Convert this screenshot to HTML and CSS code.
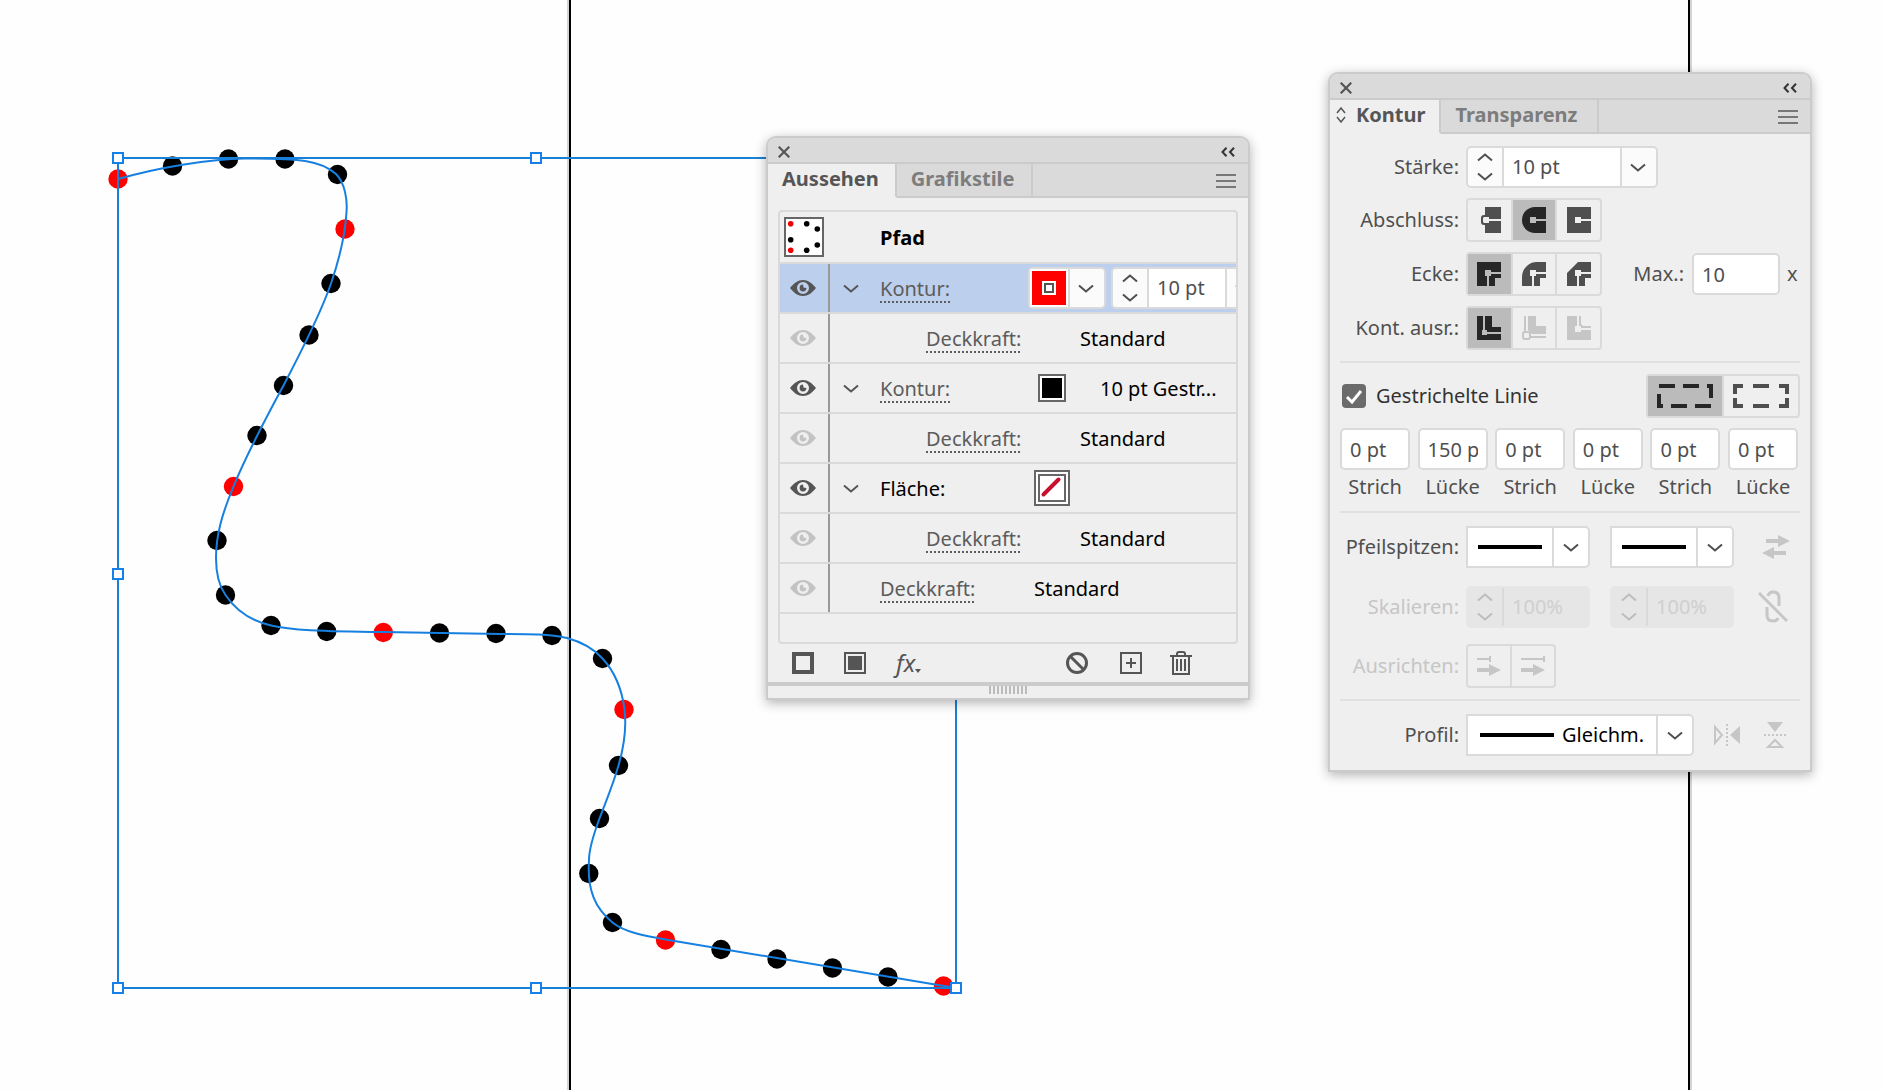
FILE: index.html
```html
<!DOCTYPE html>
<html lang="de">
<head>
<meta charset="utf-8">
<meta name="viewport" content="width=device-width, initial-scale=1">
<title>Kontur und Aussehen</title>
<link rel="stylesheet" href="styles.css">
</head>
<body>
<svg class="symbols" aria-hidden="true">
  <symbol id="eye" viewBox="0 0 26 16"><path fill="currentColor" fill-rule="evenodd" d="M0 8C4 3 8 0 13 0s9 3 13 8c-4 5-8 8-13 8S4 13 0 8zM13 2a6 6 0 1 0 0 12a6 6 0 1 0 0-12z"/><path fill="currentColor" d="M13 4.600a3.400 3.400 0 1 0 3.400 3.400L13.500 7.500z"/></symbol>
  <symbol id="down" viewBox="0 0 16 9"><path d="M1 1.500L8 7.500L15 1.500" fill="none" stroke="currentColor" stroke-width="2"/></symbol>
  <symbol id="up" viewBox="0 0 16 9"><path d="M1 7.500L8 1.500L15 7.500" fill="none" stroke="currentColor" stroke-width="2"/></symbol>
  <symbol id="close" viewBox="0 0 12 12"><path d="M.7.700L11.300 11.300M11.300.7L.7 11.300" fill="none" stroke="currentColor" stroke-width="2.200"/></symbol>
  <symbol id="collapse" viewBox="0 0 14 10"><path d="M5.500.8L1.500 5L5.500 9.200M13 .8L9 5L13 9.200" fill="none" stroke="currentColor" stroke-width="2"/></symbol>
  <symbol id="menu" viewBox="0 0 20 14"><path d="M0 1H20M0 7H20M0 13H20" stroke="currentColor" stroke-width="2"/></symbol>
</svg>

<main class="workspace">
  <svg class="drawing" aria-label="Pfad">
    <g class="guides">
      <rect class="guide-soft" x="567" y="0" width="2" height="100%"/>
      <rect x="569" y="0" width="2" height="100%"/>
      <rect x="1688" y="0" width="2" height="100%"/>
      <rect class="guide-soft" x="1690" y="0" width="2" height="100%"/>
    </g>
    <g class="dots">
      <circle cx="172.500" cy="166" r="9.700"/><circle cx="228.500" cy="159" r="9.700"/><circle cx="285" cy="159" r="9.700"/><circle cx="337.500" cy="174.500" r="9.700"/>
      <circle cx="331" cy="283.500" r="9.700"/><circle cx="309" cy="335" r="9.700"/><circle cx="283.500" cy="385.500" r="9.700"/><circle cx="257" cy="435.500" r="9.700"/>
      <circle cx="217" cy="540.500" r="9.700"/><circle cx="225.500" cy="595" r="9.700"/><circle cx="271" cy="625.500" r="9.700"/><circle cx="326.700" cy="631.500" r="9.700"/>
      <circle cx="439.500" cy="633" r="9.700"/><circle cx="496" cy="633.500" r="9.700"/><circle cx="552" cy="635.500" r="9.700"/><circle cx="602.500" cy="658.500" r="9.700"/>
      <circle cx="618.500" cy="765.500" r="9.700"/><circle cx="599.500" cy="818.500" r="9.700"/><circle cx="588.800" cy="873.500" r="9.700"/><circle cx="612.500" cy="922.500" r="9.700"/>
      <circle cx="721" cy="949.500" r="9.700"/><circle cx="777" cy="959" r="9.700"/><circle cx="832.500" cy="968" r="9.700"/><circle cx="888" cy="977" r="9.700"/>
    </g>
    <g class="dots-red">
      <circle cx="118" cy="179" r="9.700"/><circle cx="345" cy="229" r="9.700"/><circle cx="233.500" cy="486.500" r="9.700"/><circle cx="383.300" cy="632.500" r="9.700"/>
      <circle cx="624" cy="709.500" r="9.700"/><circle cx="665.500" cy="940" r="9.700"/><circle cx="943.500" cy="986" r="9.700"/>
    </g>
    <path class="curve" d="M118 179C160 167 210 159 245 158.500C300 158.500 320 160 336 174C345 183 347.500 200 346.500 212C345 238 338 263 331 283.500C323 307 300 354 283.500 385.500C266 418 247 453 233.500 486.500C222 514 216 535 216 558C216 576 219 586 225.500 595C236 611 252 621 271 625.500C290 630 320 631.500 383 632L500 634C530 634 550 634 567 638C582 642 594 649 602.500 658.500C615 672 622 690 624.500 709.500C627 730 623 750 618.500 765.500C613 785 606 801 599.500 818.500C593 836 589 850 589 860C587 890 595 908 612.500 922.500C624 932 645 936 665.500 939.500L956 988"/>
    <rect class="bounds" x="118" y="158" width="838" height="830"/>
    <g class="handles">
      <rect x="113" y="153" width="10" height="10"/><rect x="531" y="153" width="10" height="10"/>
      <rect x="113" y="569" width="10" height="10"/><rect x="113" y="983" width="10" height="10"/>
      <rect x="531" y="983" width="10" height="10"/><rect x="951" y="983" width="10" height="10"/>
    </g>
  </svg>

  <section class="panel panel-appearance" aria-label="Aussehen">
    <header class="titlebar">
      <button class="bare" type="button" aria-label="Schließen"><svg width="12" height="12"><use href="#close"/></svg></button>
      <button class="bare dark" type="button" aria-label="Minimieren"><svg width="14" height="10"><use href="#collapse"/></svg></button>
    </header>
    <nav class="tabs">
      <button class="tab tab-active" type="button">Aussehen</button>
      <button class="tab" type="button">Grafikstile</button>
      <button class="bare tab-menu" type="button" aria-label="Menü"><svg width="20" height="14"><use href="#menu"/></svg></button>
    </nav>
    <div class="list">
      <div class="row row-head">
        <svg class="thumb" width="40" height="40" viewBox="0 0 40 40"><rect x="1" y="1" width="38" height="38" fill="#fff" stroke="#666" stroke-width="2"/><g fill="#000"><circle cx="22.700" cy="6.700" r="2.800"/><circle cx="33.300" cy="12" r="2.800"/><circle cx="6.700" cy="22.700" r="2.800"/><circle cx="33.300" cy="28" r="2.800"/><circle cx="22.700" cy="33.300" r="2.800"/></g><g fill="#f00000"><circle cx="6.700" cy="6.700" r="2.800"/><circle cx="6.700" cy="33.300" r="2.800"/></g></svg>
        <strong class="name">Pfad</strong>
      </div>
      <div class="row row-selected">
        <button class="bare eye" type="button" aria-label="Sichtbarkeit"><svg width="26" height="16"><use href="#eye"/></svg></button>
        <button class="bare twist" type="button" aria-label="Aufklappen"><svg width="16" height="9"><use href="#down"/></svg></button>
        <a class="name link" href="#kontur">Kontur:</a>
        <div class="controls">
          <div class="field">
            <button class="swatch-red" type="button" aria-label="Konturfarbe"><svg width="34" height="34" viewBox="0 0 34 34"><rect width="34" height="34" fill="#f00"/><rect x="10" y="10" width="14" height="14" fill="#fff"/><rect x="13" y="13" width="8" height="8" fill="#fff" stroke="#555" stroke-width="2"/></svg></button>
            <button class="drop" type="button" aria-label="Farbe wählen"><svg width="16" height="9"><use href="#down"/></svg></button>
          </div>
          <div class="field">
            <div class="spin"><button type="button" aria-label="Mehr"><svg width="16" height="9"><use href="#up"/></svg></button><button type="button" aria-label="Weniger"><svg width="16" height="9"><use href="#down"/></svg></button></div>
            <input class="value value-row" type="text" value="10 pt" aria-label="Konturstärke">
            <button class="drop" type="button" aria-label="Stärke wählen"><svg width="16" height="9"><use href="#down"/></svg></button>
          </div>
        </div>
      </div>
      <div class="row">
        <button class="bare eye eye-off" type="button" aria-label="Sichtbarkeit"><svg width="26" height="16"><use href="#eye"/></svg></button>
        <a class="sub link" href="#deckkraft">Deckkraft:</a><span class="text">Standard</span>
      </div>
      <div class="row">
        <button class="bare eye" type="button" aria-label="Sichtbarkeit"><svg width="26" height="16"><use href="#eye"/></svg></button>
        <button class="bare twist" type="button" aria-label="Aufklappen"><svg width="16" height="9"><use href="#down"/></svg></button>
        <a class="name link" href="#kontur">Kontur:</a>
        <svg class="swatch" width="36" height="28" viewBox="0 0 36 28"><rect x="5" y="1" width="26" height="26" fill="#fff" stroke="#666" stroke-width="2"/><rect x="8" y="4" width="20" height="20"/></svg>
        <span class="text">10 pt Gestr...</span>
      </div>
      <div class="row">
        <button class="bare eye eye-off" type="button" aria-label="Sichtbarkeit"><svg width="26" height="16"><use href="#eye"/></svg></button>
        <a class="sub link" href="#deckkraft">Deckkraft:</a><span class="text">Standard</span>
      </div>
      <div class="row">
        <button class="bare eye" type="button" aria-label="Sichtbarkeit"><svg width="26" height="16"><use href="#eye"/></svg></button>
        <button class="bare twist" type="button" aria-label="Aufklappen"><svg width="16" height="9"><use href="#down"/></svg></button>
        <span class="name">Fläche:</span>
        <svg class="swatch" width="36" height="36" viewBox="0 0 36 36"><rect x="1" y="1" width="34" height="34" fill="#fff" stroke="#666" stroke-width="2"/><rect x="5" y="5" width="26" height="26" fill="#fff" stroke="#666" stroke-width="2"/><path d="M9.500 24.500L24.500 9.500" stroke="#c8102e" stroke-width="4" stroke-linecap="round"/></svg>
      </div>
      <div class="row">
        <button class="bare eye eye-off" type="button" aria-label="Sichtbarkeit"><svg width="26" height="16"><use href="#eye"/></svg></button>
        <a class="sub link" href="#deckkraft">Deckkraft:</a><span class="text">Standard</span>
      </div>
      <div class="row">
        <button class="bare eye eye-off" type="button" aria-label="Sichtbarkeit"><svg width="26" height="16"><use href="#eye"/></svg></button>
        <a class="name name-only link" href="#deckkraft">Deckkraft:</a><span class="text">Standard</span>
      </div>
    </div>
    <footer class="tools">
      <div class="tool-group">
        <button class="bare" type="button" aria-label="Neue Kontur"><svg width="22" height="22"><rect x="2" y="2" width="18" height="18" fill="none" stroke="currentColor" stroke-width="4"/></svg></button>
        <button class="bare" type="button" aria-label="Neue Fläche"><svg width="22" height="22"><rect x="1" y="1" width="20" height="20" fill="none" stroke="currentColor" stroke-width="2"/><rect x="4" y="4" width="14" height="14" fill="currentColor"/></svg></button>
        <button class="bare fx" type="button" aria-label="Effekt">fx<svg width="6" height="4"><path d="M0 0H6L3 4z" fill="currentColor"/></svg></button>
      </div>
      <div class="tool-group tool-group-end">
        <button class="bare" type="button" aria-label="Aussehen löschen"><svg width="22" height="22"><circle cx="11" cy="11" r="9.500" fill="none" stroke="currentColor" stroke-width="3"/><path d="M4.500 4.500L17.500 17.500" stroke="currentColor" stroke-width="3"/></svg></button>
        <button class="bare" type="button" aria-label="Duplizieren"><svg width="22" height="22"><path d="M1 1H21V21H1zM11 6V16M6 11H16" fill="none" stroke="currentColor" stroke-width="2"/></svg></button>
        <button class="bare" type="button" aria-label="Löschen"><svg width="22" height="24"><path d="M0 5H22M3 5V23H19V5M7 5V3Q7 1 9 1H13Q15 1 15 3V5M7 8V20M11 8V20M15 8V20" fill="none" stroke="currentColor" stroke-width="2"/></svg></button>
      </div>
    </footer>
    <div class="grip"><span class="grip-bars"></span></div>
  </section>

  <section class="panel panel-stroke" aria-label="Kontur">
    <header class="titlebar">
      <button class="bare" type="button" aria-label="Schließen"><svg width="12" height="12"><use href="#close"/></svg></button>
      <button class="bare dark" type="button" aria-label="Minimieren"><svg width="14" height="10"><use href="#collapse"/></svg></button>
    </header>
    <nav class="tabs">
      <button class="tab tab-active tab-cycle" type="button"><svg width="10" height="16"><path d="M1 6L5 1L9 6M1 10L5 15L9 10" fill="none" stroke="currentColor" stroke-width="1.500"/></svg>Kontur</button>
      <button class="tab tab-wide" type="button">Transparenz</button>
      <button class="bare tab-menu" type="button" aria-label="Menü"><svg width="20" height="14"><use href="#menu"/></svg></button>
    </nav>
    <form class="form">
      <div class="line">
        <label class="caption" for="weight">Stärke:</label>
        <div class="field">
          <div class="spin"><button type="button" aria-label="Mehr"><svg width="16" height="9"><use href="#up"/></svg></button><button type="button" aria-label="Weniger"><svg width="16" height="9"><use href="#down"/></svg></button></div>
          <input class="value value-weight" id="weight" type="text" value="10 pt">
          <button class="drop" type="button" aria-label="Stärke wählen"><svg width="16" height="9"><use href="#down"/></svg></button>
        </div>
      </div>
      <div class="line">
        <span class="caption">Abschluss:</span>
        <div class="segments" role="group" aria-label="Abschluss">
          <button type="button" aria-label="Abgeflacht"><svg width="24" height="26"><path d="M8 0H24V12H12V14H24V26H8z" fill="currentColor"/><rect x="4" y="8" width="8" height="10" rx="3" fill="currentColor"/><path class="cut" d="M7 10H12V12H24V14H12V16H7L6 15V11z"/></svg></button>
          <button class="on" type="button" aria-label="Abgerundet"><svg width="24" height="26"><path d="M24 0H13A13 13 0 0 0 13 26H24z" fill="currentColor"/><path class="cut" d="M8 10H14V12H24V14H14V16H8z"/></svg></button>
          <button type="button" aria-label="Überstehend"><svg width="24" height="26"><path d="M0 0H24V26H0z" fill="currentColor"/><path class="cut" d="M8 10H14V12H24V14H14V16H8z"/></svg></button>
        </div>
      </div>
      <div class="line">
        <span class="caption">Ecke:</span>
        <div class="segments" role="group" aria-label="Ecke">
          <button class="on" type="button" aria-label="Gehrung"><svg width="24" height="24"><path d="M0 0H24V16H18V24H0z" fill="currentColor"/><path class="cut" d="M8 8H14V10H24V12H14V14H12V24H10V14H8z"/></svg></button>
          <button type="button" aria-label="Rund"><svg width="24" height="24"><path d="M24 0H15A15 15 0 0 0 0 15V24H18V16H24z" fill="currentColor"/><path class="cut" d="M8 8H14V10H24V12H14V14H12V24H10V14H8z"/></svg></button>
          <button type="button" aria-label="Abgeflachte Ecke"><svg width="24" height="24"><path d="M11 0H24V16H18V24H0V11z" fill="currentColor"/><path class="cut" d="M8 8H14V10H24V12H14V14H12V24H10V14H8z"/></svg></button>
        </div>
        <div class="miter"><label for="miter">Max.:</label><input class="box box-miter" id="miter" type="text" value="10"><span class="times">x</span></div>
      </div>
      <div class="line">
        <span class="caption">Kont. ausr.:</span>
        <div class="segments" role="group" aria-label="Kontur ausrichten">
          <button class="on" type="button" aria-label="Mitte"><svg width="24" height="24"><path d="M0 0H15V11H24V24H0z" fill="currentColor"/><path class="cut" d="M6 0H8V14H10V16H24V18H10V19H5V14H6z"/></svg></button>
          <button type="button" disabled aria-label="Innen"><svg width="24" height="24"><path d="M6 0H14V10H24V18H10L6 14zM2 0H4V16H2zM8 20H24V22H8z" fill="currentColor"/><rect x="1" y="16" width="7" height="7" rx="2" fill="none" stroke="currentColor" stroke-width="2"/></svg></button>
          <button type="button" disabled aria-label="Außen"><svg width="24" height="24"><path d="M0 0H10V14H24V24H0zM12 0H14V8L16 10H24V12H14L12 10z" fill="currentColor"/><path class="cut" d="M8 10H14V16H8z"/></svg></button>
        </div>
      </div>
      <hr>
      <div class="line line-dash">
        <label class="check"><input type="checkbox" checked><span>Gestrichelte Linie</span></label>
        <div class="segments segments-wide" role="group" aria-label="Strichausrichtung">
          <button class="on" type="button" aria-label="Exakte Längen"><svg width="56" height="24"><path fill="currentColor" d="M2 0H18V4H2zM26 0H42V4H26zM50 0H56V14H52V4H50zM0 10H4V20H6V24H0zM14 20H30V24H14zM38 20H54V24H38z"/></svg></button>
          <button type="button" aria-label="An Ecken ausrichten"><svg width="56" height="24"><path fill="currentColor" d="M0 0H10V4H4V10H0zM20 0H36V4H20zM46 0H56V10H52V4H46zM0 14H4V20H10V24H0zM20 20H36V24H20zM52 14H56V24H46V20H52z"/></svg></button>
        </div>
      </div>
      <div class="dashes">
        <label><input class="box" type="text" value="0 pt">Strich</label>
        <label><input class="box" type="text" value="150 pt">Lücke</label>
        <label><input class="box" type="text" value="0 pt">Strich</label>
        <label><input class="box" type="text" value="0 pt">Lücke</label>
        <label><input class="box" type="text" value="0 pt">Strich</label>
        <label><input class="box" type="text" value="0 pt">Lücke</label>
      </div>
      <hr>
      <div class="line line-arrows">
        <span class="caption">Pfeilspitzen:</span>
        <div class="pick pick-arrow"><select aria-label="Anfang"><option></option></select><span class="stroke"></span><svg class="pick-mark" width="16" height="9"><use href="#down"/></svg></div>
        <div class="pick pick-arrow"><select aria-label="Ende"><option></option></select><span class="stroke"></span><svg class="pick-mark" width="16" height="9"><use href="#down"/></svg></div>
        <button class="bare faint" type="button" aria-label="Tauschen"><svg width="28" height="24"><path fill="currentColor" d="M4 4H16V0L28 6L16 12V8H4zM24 20H12V24L0 18L12 12V16H24z"/></svg></button>
      </div>
      <div class="line line-scale faint">
        <label class="caption" for="scale">Skalieren:</label>
        <div class="field field-off">
          <div class="spin"><button type="button" disabled aria-label="Mehr"><svg width="16" height="9"><use href="#up"/></svg></button><button type="button" disabled aria-label="Weniger"><svg width="16" height="9"><use href="#down"/></svg></button></div>
          <input class="value value-scale" id="scale" type="text" value="100%" disabled>
        </div>
        <div class="field field-off">
          <div class="spin"><button type="button" disabled aria-label="Mehr"><svg width="16" height="9"><use href="#up"/></svg></button><button type="button" disabled aria-label="Weniger"><svg width="16" height="9"><use href="#down"/></svg></button></div>
          <input class="value value-scale" type="text" value="100%" disabled aria-label="Skalieren Ende">
        </div>
        <button class="bare faint" type="button" aria-label="Verknüpfen"><svg width="30" height="34"><path d="M1 3L29 31M10 6Q11 2 15 2Q21 2 21 8V16M9 17V25Q9 31 15 31Q19 31 20 28" fill="none" stroke="currentColor" stroke-width="3"/></svg></button>
      </div>
      <div class="line line-align faint">
        <span class="caption">Ausrichten:</span>
        <div class="segments segments-two" role="group" aria-label="Pfeilausrichtung">
          <button type="button" disabled aria-label="Über Ende hinaus"><svg width="24" height="20"><path fill="currentColor" d="M0 2H12V0H14V6H12V4H0zM0 12H12V8L24 14L12 20V16H0z"/></svg></button>
          <button type="button" disabled aria-label="Am Ende"><svg width="24" height="20"><path fill="currentColor" d="M0 2H22V0H24V6H22V4H0zM0 12H12V8L24 14L12 20V16H0z"/></svg></button>
        </div>
      </div>
      <hr>
      <div class="line line-profile">
        <label class="caption" for="profile">Profil:</label>
        <div class="pick pick-profile"><select id="profile"><option>Gleichm.</option></select><span class="stroke"></span><svg class="pick-mark" width="16" height="9"><use href="#down"/></svg></div>
        <button class="bare faint flip" type="button" aria-label="Horizontal spiegeln"><svg width="26" height="22"><path d="M1 3V19L8 11z" fill="none" stroke="currentColor" stroke-width="2"/><path d="M26 2V20L16 11z" fill="currentColor"/><path d="M13 0V22" stroke="currentColor" stroke-width="2" stroke-dasharray="2 2"/></svg></button>
        <button class="bare faint flip-v" type="button" aria-label="Vertikal spiegeln"><svg width="22" height="26"><path d="M3 0H19L11 10z" fill="currentColor"/><path d="M4 25H18L11 18z" fill="none" stroke="currentColor" stroke-width="2"/><path d="M0 13H22" stroke="currentColor" stroke-width="2" stroke-dasharray="2 2"/></svg></button>
      </div>
    </form>
  </section>
</main>
</body>
</html>
```

FILE: styles.css
```css
* { box-sizing: border-box; }

body {
  margin: 0;
  background: #fefefe;
  color: #4f4f4f;
  font: 20px/28px "Noto Sans", "Open Sans", sans-serif;
}

button, input, select {
  margin: 0;
  padding: 0;
  border: 0;
  background: none;
  color: inherit;
  font: inherit;
}

svg { display: block; flex: none; }
.symbols { position: absolute; width: 0; height: 0; }

/* Artboard */
.workspace {
  position: relative;
  min-height: 100vh;
  overflow: hidden;
}
.drawing {
  position: absolute;
  inset: 0;
  width: 100%;
  height: 100%;
}
.guide-soft { fill: #d4d4d4; }
.dots-red { fill: #f00; }
.curve { fill: none; stroke: #1680e0; stroke-width: 2; }
.bounds { fill: none; stroke: #1a7fd6; stroke-width: 2; }
.handles { fill: #fff; stroke: #1680e8; stroke-width: 2; }

/* Floating panels */
.panel {
  position: absolute;
  width: 484px;
  border: 2px solid #cbcbcb;
  border-radius: 10px 10px 0 0;
  background: #efefef;
  box-shadow: 0 3px 12px rgba(0, 0, 0, .3);
}
.panel-appearance { left: 766px; top: 136px; }
.panel-stroke { left: 1328px; top: 72px; }

.bare { display: flex; flex: none; align-items: center; color: #555; }
.bare.dark { color: #333; }

.titlebar {
  display: flex;
  justify-content: space-between;
  align-items: center;
  height: 26px;
  padding: 4px 13px 0 10px;
  border-bottom: 2px solid #cbcbcb;
  border-radius: 8px 8px 0 0;
  background: #dadada;
}
.tabs {
  display: flex;
  height: 34px;
  background: #dadada;
}
.tab {
  padding: 0 16px 2px 14px;
  border-right: 2px solid #cbcbcb;
  border-bottom: 2px solid #cbcbcb;
  color: #7d7d7d;
  font-weight: 700;
}
.tab-active {
  border-bottom-color: #efefef;
  background: #efefef;
  color: #555;
}
.tab-cycle {
  display: flex;
  align-items: center;
  gap: 10px;
  padding-left: 6px;
  padding-right: 14px;
}
.tab-wide { padding-right: 20px; }
.tab-menu {
  flex: 1;
  justify-content: flex-end;
  padding: 2px 12px 0 0;
  border-bottom: 2px solid #cbcbcb;
  color: #777;
}

/* Appearance list */
.list {
  margin: 12px 10px 0;
  padding-bottom: 28px;
  border: 2px solid #dadada;
  border-radius: 4px;
}
.row {
  display: flex;
  align-items: center;
  height: 50px;
  overflow: hidden;
  border-bottom: 2px solid #dadada;
  color: #000;
}
.row-head { height: 52px; }
.row-selected { background: #bccfed; }
.thumb { margin: 0 56px 0 4px; }
.eye {
  width: 50px;
  height: 48px;
  padding-left: 10px;
  border-right: 2px solid #999;
}
.eye-off { color: #c3c3c3; }
.twist { width: 50px; height: 48px; padding-left: 13px; }
.name, .sub { flex: none; width: 154px; }
.name, .sub, .text { padding-top: 2px; }
.name-only { margin-left: 50px; }
.sub { margin-left: 96px; }
.link { color: #5c5c5c; text-decoration: underline dotted 2px; text-underline-offset: 5px; }
.swatch { margin-right: 30px; }
.controls { display: flex; flex: none; gap: 5px; margin-left: -6px; color: #4f4f4f; }

/* Fields */
.field {
  display: flex;
  flex: none;
  height: 42px;
  border: 2px solid #dadada;
  border-radius: 5px;
  background: #fbfbfb;
}
.spin {
  display: flex;
  flex-direction: column;
  width: 36px;
  border-right: 2px solid #dadada;
}
.spin button {
  display: flex;
  flex: 1;
  align-items: center;
  justify-content: center;
}
.value { background: #fff; padding: 0 8px; min-width: 0; }
.value-weight { width: 116px; }
.value-row { width: 76px; }
.value-scale { width: 84px; }
.drop {
  display: flex;
  align-items: center;
  justify-content: center;
  width: 36px;
  padding-right: 2px;
  border-left: 2px solid #dadada;
}
.swatch-red { padding: 2px; background: #fff; }
.field-off, .field-off .value { border-color: #e6e6e6; background: #e6e6e6; color: #cfcfcf; }
.field-off svg { color: #bdbdbd; }

/* Appearance footer */
.tools {
  display: flex;
  justify-content: space-between;
  height: 38px;
  padding: 0 56px 0 24px;
}
.tool-group { display: flex; align-items: center; gap: 30px; }
.tool-group-end { gap: 32px; }
.tool-group-end .bare:last-child { margin-left: -4px; }
.fx { align-items: flex-end; font-style: italic; font-size: 24px; }
.fx svg { margin-bottom: 4px; }
.grip {
  display: flex;
  justify-content: center;
  height: 16px;
  border-top: 4px solid #cbcbcb;
}
.grip-bars {
  width: 38px;
  height: 8px;
  background: repeating-linear-gradient(90deg, #bbb 0 2px, #efefef 2px 4px);
}

/* Stroke form */
.form { padding: 12px 10px 14px; }
.line { display: flex; align-items: center; margin-bottom: 10px; }
.caption { width: 119px; margin-right: 7px; text-align: right; white-space: nowrap; }
hr {
  height: 2px;
  margin: 11px 0;
  border: 0;
  background: #e1e1e1;
}
.segments {
  display: flex;
  width: 136px;
  height: 44px;
  border: 2px solid #dadada;
  border-radius: 4px;
}
.segments button {
  display: flex;
  flex: 1;
  align-items: center;
  justify-content: center;
  border-left: 2px solid #dadada;
}
.segments button:first-child { border-left: 0; }
.segments .on { background: #bbb; color: #262626; }
.segments .on .cut { fill: #bbb; }
.segments :disabled { color: #c6c6c6; }
.segments-wide { width: 154px; }
.segments-two { width: 90px; }
.cut { fill: #efefef; }

.box {
  width: 70px;
  height: 42px;
  padding: 0 8px;
  border: 2px solid #dadada;
  border-radius: 5px;
  background: #fff;
}
.miter { display: flex; align-items: center; margin-left: auto; }
.box-miter { width: 88px; margin: 0 7px 0 8px; }
.times { width: 13px; }

.line-dash { justify-content: space-between; }
.check { display: flex; align-items: center; gap: 10px; padding-left: 2px; color: #333; }
.check input {
  appearance: none;
  width: 24px;
  height: 24px;
  border-radius: 4px;
  background: #6b6b6b;
}
.check input:checked {
  background: #6b6b6b url("data:image/svg+xml,%3Csvg xmlns='http://www.w3.org/2000/svg' width='24' height='24'%3E%3Cpath d='M5 13L10 18L19 7' fill='none' stroke='%23fff' stroke-width='3'/%3E%3C/svg%3E");
}
.dashes { display: flex; justify-content: space-between; padding-right: 2px; }
.dashes label {
  display: flex;
  flex-direction: column;
  align-items: center;
  gap: 3px;
  height: 74px;
}
.dashes + hr { margin: 9px 0 13px; }

.line-arrows { margin-bottom: 18px; }
.line-scale { margin-bottom: 16px; }
.line-align { margin-bottom: 0; }
.line-align + hr { margin-bottom: 13px; }
.line-profile { margin-bottom: 0; }
.faint { color: #c6c6c6; }
.pick + .pick, .field + .field { margin-left: 20px; }
.controls .field + .field { margin-left: 0; }
.line-arrows .bare { margin-left: 28px; }
.line-scale .bare { margin-left: 24px; }
.line-profile .flip { margin-left: 20px; }
.line-profile .flip-v { margin-left: 24px; }

.pick {
  display: grid;
  grid-template-columns: 1fr 34px;
  align-items: center;
  height: 42px;
  border: 2px solid #dadada;
  border-radius: 0 5px 5px 0;
  background: linear-gradient(#dadada, #dadada) right 34px top / 2px 100% no-repeat #fff;
}
.pick-arrow { width: 124px; }
.pick-profile { width: 228px; }
.pick select {
  grid-area: 1 / 1 / 2 / 3;
  width: 100%;
  height: 38px;
  appearance: none;
  color: #000;
}
.pick-profile select { padding-left: 94px; }
.pick .stroke {
  grid-area: 1 / 1;
  width: 64px;
  height: 4px;
  margin-left: 10px;
  background: #000;
  pointer-events: none;
}
.pick-profile .stroke { width: 74px; margin-left: 12px; }
.pick-mark {
  grid-area: 1 / 2;
  justify-self: center;
  pointer-events: none;
}
```
